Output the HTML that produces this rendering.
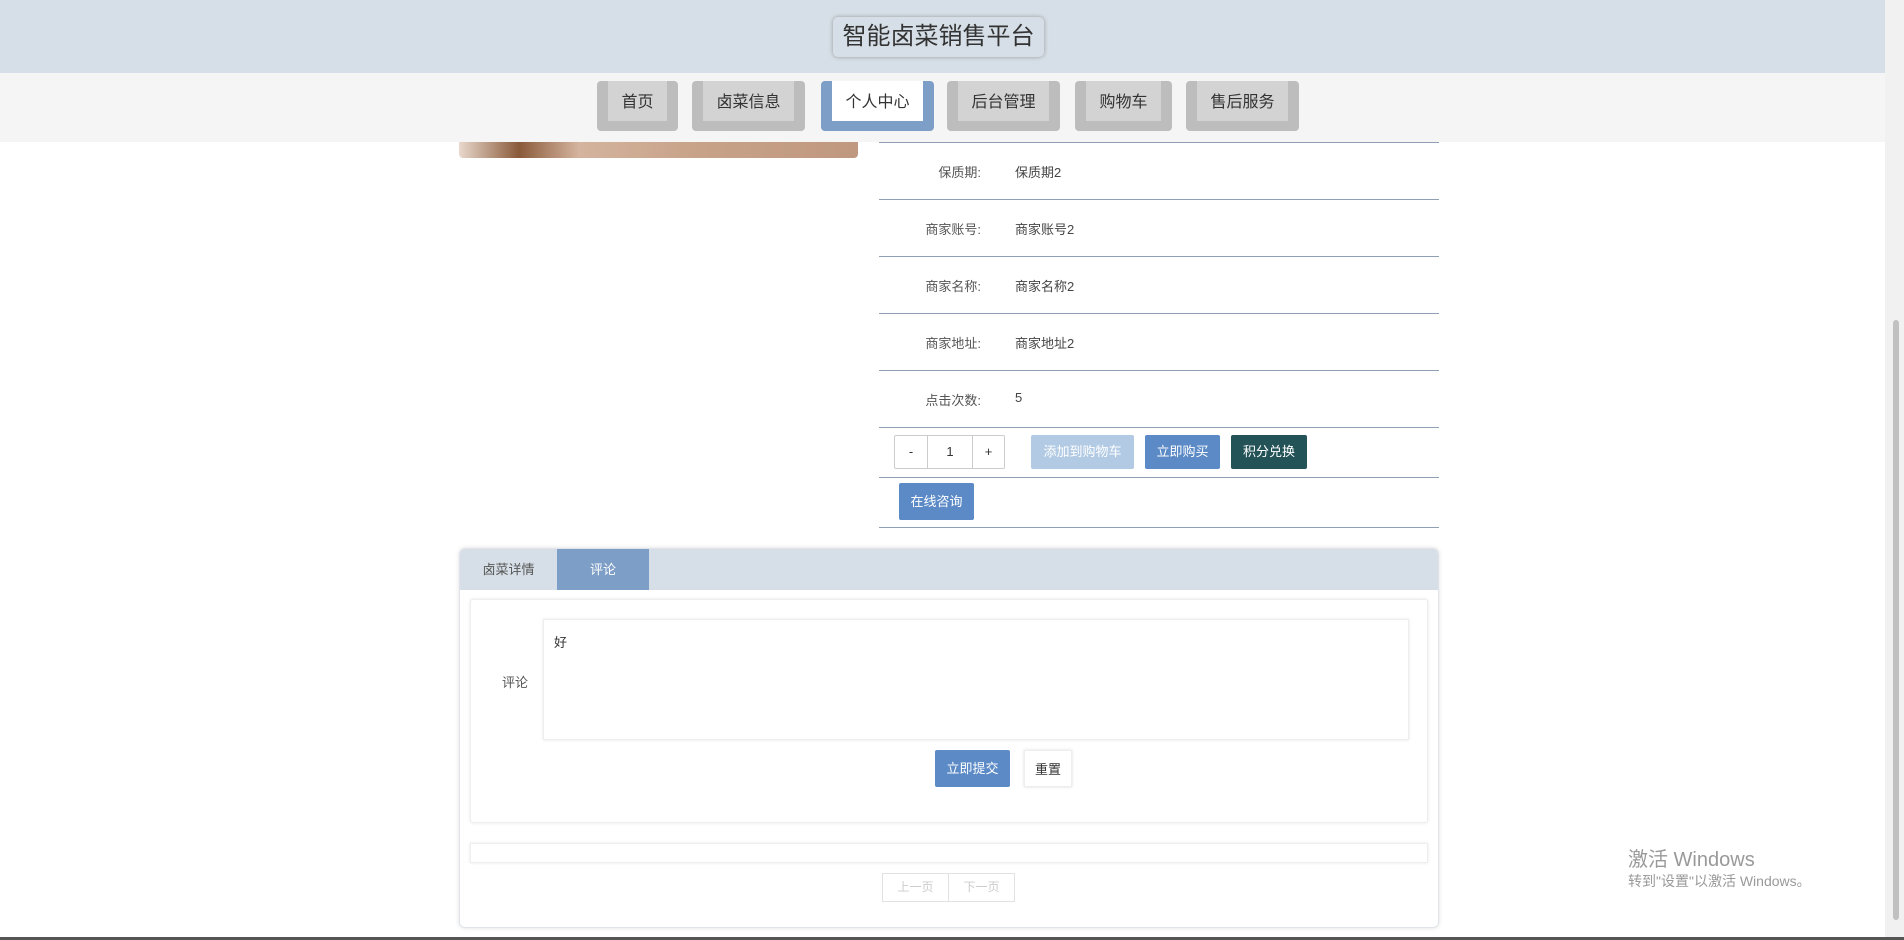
<!DOCTYPE html><html><head><meta charset="utf-8"><style>
*{box-sizing:border-box;margin:0;padding:0}
body{width:1904px;height:940px;overflow:hidden;background:#fff;font-family:"Liberation Sans","Noto Sans CJK SC",sans-serif;position:relative;font-size:14px;color:#333}
.a{position:absolute}
.hdr{left:0;top:0;width:1885px;height:73px;background:#d6dfe7;box-shadow:0 2px 3px #bbb}
.title{left:833px;top:17px;width:211px;height:40px;border-radius:5px;box-shadow:0 0 4px #999;font-size:24px;color:#333;text-align:center;line-height:40px}
.nav{left:0;top:73px;width:1885px;height:69px;background:#f5f5f5}
.nb{top:81px;height:50px;background:#bdbdbd;border-radius:4px}
.nb span{position:absolute;left:11px;right:11px;top:0;height:40px;background:#d3d3d3;text-align:center;line-height:44px;font-size:16px;color:#333}
.nb.on{background:#7d9ec6}.nb.on span{background:#fff}
.line{left:879px;width:560px;height:1px;background:#8fa0b6}
.lb{left:879px;width:102px;text-align:right;font-size:13px;color:#555}
.val{left:1015px;font-size:13px;color:#444}
.btn{color:#fff;font-size:13px;text-align:center;border-radius:2px}
</style></head><body>
<div class="a hdr"></div>
<div class="a title">智能卤菜销售平台</div>
<div class="a nav"></div>
<div class="a nb" style="left:597px;width:81px"><span>首页</span></div>
<div class="a nb" style="left:692px;width:113px"><span>卤菜信息</span></div>
<div class="a nb on" style="left:821px;width:113px"><span>个人中心</span></div>
<div class="a nb" style="left:947px;width:113px"><span>后台管理</span></div>
<div class="a nb" style="left:1075px;width:97px"><span>购物车</span></div>
<div class="a nb" style="left:1186px;width:113px"><span>售后服务</span></div>
<div class="a" style="left:459px;top:142px;width:399px;height:16px;background:linear-gradient(90deg,#e8d8cc,#8a5a3a 15%,#d4b49e 30%,#c7a288 60%,#c09880);border-radius:0 0 4px 4px"></div>
<div class="a line" style="top:142px"></div>
<div class="a lb" style="top:162px">保质期:</div><div class="a val" style="top:162px">保质期2</div>
<div class="a line" style="top:199px"></div>
<div class="a lb" style="top:219px">商家账号:</div><div class="a val" style="top:219px">商家账号2</div>
<div class="a line" style="top:256px"></div>
<div class="a lb" style="top:276px">商家名称:</div><div class="a val" style="top:276px">商家名称2</div>
<div class="a line" style="top:313px"></div>
<div class="a lb" style="top:333px">商家地址:</div><div class="a val" style="top:333px">商家地址2</div>
<div class="a line" style="top:370px"></div>
<div class="a lb" style="top:390px">点击次数:</div><div class="a val" style="top:390px">5</div>
<div class="a line" style="top:427px"></div>
<div class="a" style="left:894px;top:435px;width:111px;height:34px;border:1px solid #ccc;border-radius:2px;font-size:13px;line-height:32px;display:flex"><span style="width:33px;text-align:center;border-right:1px solid #ccc">-</span><span style="width:45px;text-align:center;border-right:1px solid #ccc">1</span><span style="flex:1;text-align:center">+</span></div>
<div class="a btn" style="left:1031px;top:435px;width:103px;height:34px;line-height:34px;background:#b2cae3">添加到购物车</div>
<div class="a btn" style="left:1145px;top:435px;width:75px;height:34px;line-height:34px;background:#5b8ac6">立即购买</div>
<div class="a btn" style="left:1231px;top:435px;width:76px;height:34px;line-height:34px;background:#245357">积分兑换</div>
<div class="a line" style="top:477px"></div>
<div class="a btn" style="left:899px;top:483px;width:75px;height:37px;line-height:37px;background:#5b8ac6">在线咨询</div>
<div class="a line" style="top:527px"></div>
<div class="a" style="left:459px;top:548px;width:980px;height:380px;border:1px solid #e0e4ea;border-radius:6px;box-shadow:0 0 4px #ddd;overflow:hidden">
<div style="height:41px;background:#d6dfe7;position:relative">
<div class="a" style="left:0;top:0;width:97px;height:41px;line-height:41px;text-align:center;font-size:13px;color:#555">卤菜详情</div>
<div class="a" style="left:97px;top:0;width:92px;height:41px;line-height:41px;text-align:center;font-size:13px;color:#fff;background:#7d9ec6">评论</div>
</div></div>
<div class="a" style="left:470px;top:599px;width:958px;height:224px;border:1px solid #eee;border-radius:3px;box-shadow:0 0 3px #e5e5e5"></div>
<div class="a" style="left:502px;top:672px;font-size:13px;color:#555">评论</div>
<div class="a" style="left:543px;top:619px;width:866px;height:121px;border:1px solid #eee;box-shadow:0 0 3px #e5e5e5;padding:12px 10px;font-size:13px">好</div>
<div class="a btn" style="left:935px;top:750px;width:75px;height:37px;line-height:37px;background:#5b8ac6">立即提交</div>
<div class="a" style="left:1024px;top:750px;width:48px;height:37px;line-height:37px;text-align:center;font-size:13px;border:1px solid #eee;box-shadow:0 0 3px #ddd">重置</div>
<div class="a" style="left:470px;top:843px;width:958px;height:20px;border:1px solid #eee;box-shadow:0 0 3px #e5e5e5"></div>
<div class="a" style="left:882px;top:873px;width:133px;height:29px;border:1px solid #e2e2e2;display:flex;font-size:12px;color:#ccc;line-height:27px"><span style="flex:1;text-align:center;border-right:1px solid #e2e2e2">上一页</span><span style="flex:1;text-align:center">下一页</span></div>
<div class="a" style="left:1628px;top:843px;font-size:20px;color:#999">激活 Windows</div>
<div class="a" style="left:1628px;top:871px;font-size:14px;color:#999">转到"设置"以激活 Windows。</div>
<div class="a" style="left:1885px;top:0;width:19px;height:940px;background:#f1f1f1"></div>
<div class="a" style="left:1893px;top:320px;width:6px;height:600px;background:#c1c1c1;border-radius:3px"></div>
<div class="a" style="left:0;top:937px;width:1904px;height:3px;background:#555"></div>
</body></html>
